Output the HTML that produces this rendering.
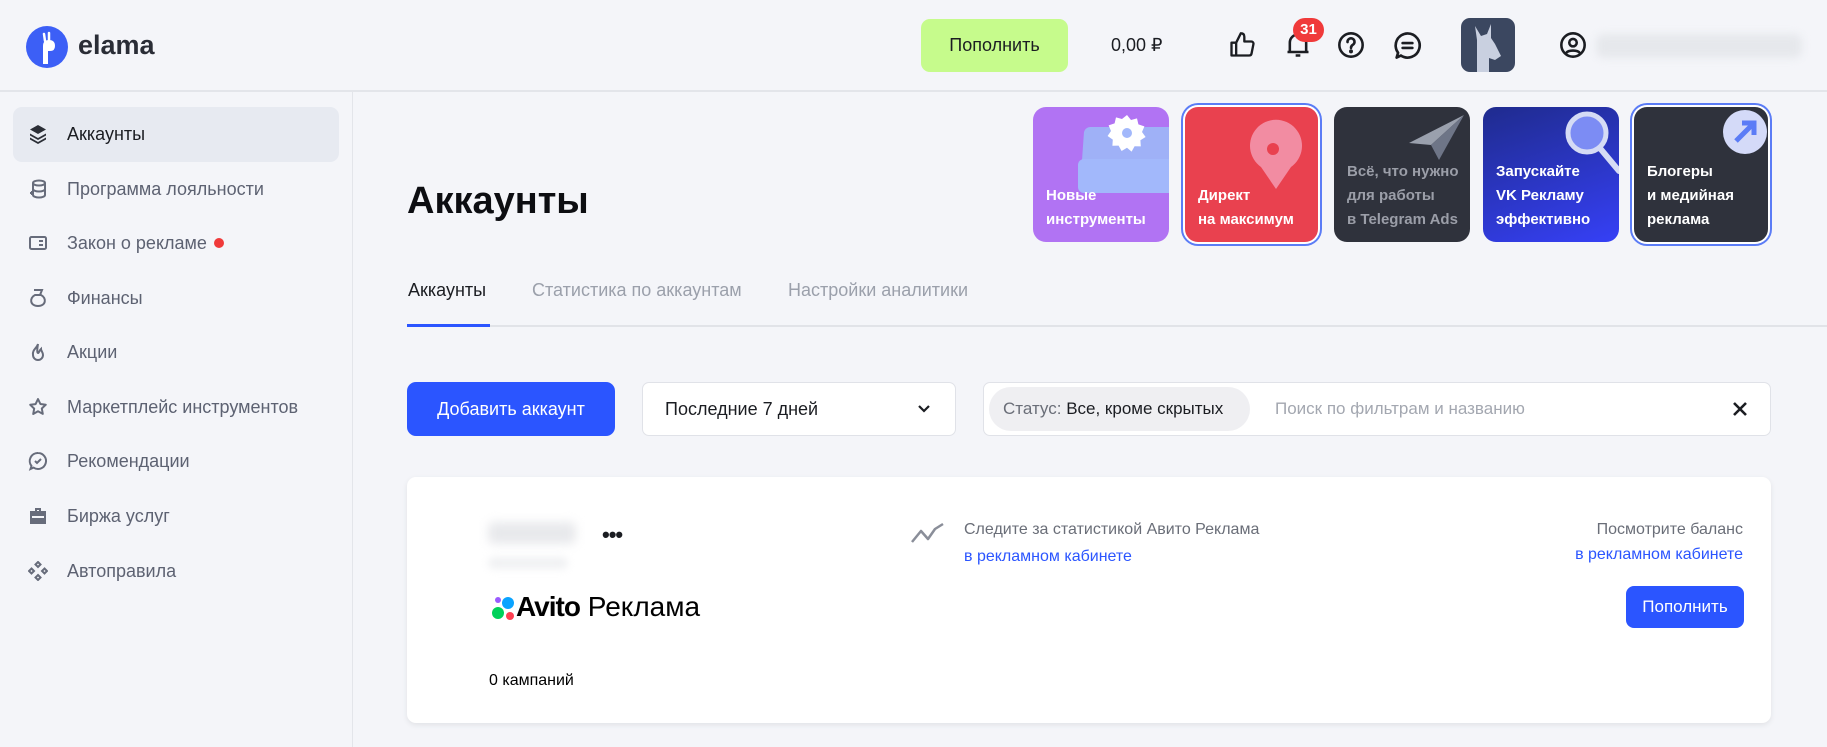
<!DOCTYPE html>
<html><head><meta charset="utf-8"><style>
*{box-sizing:border-box;margin:0;padding:0}
body{width:1827px;height:747px;overflow:hidden;background:#f4f5f9;font-family:"Liberation Sans","Noto Sans CJK SC",sans-serif;color:#1b1d22;position:relative}
.abs{position:absolute}
.hdr{left:0;top:0;width:1827px;height:92px;border-bottom:2px solid #e3e5ea}
.side{left:0;top:92px;width:353px;height:655px;border-right:1px solid #e3e5ea}
.it{position:absolute;left:0;height:30px;display:flex;align-items:center;font-size:18px;color:#5d6272}
.it svg{position:absolute;left:28px}
.it span{position:absolute;left:67px;white-space:nowrap}
.card{border-radius:13px;width:136px;height:135px;top:107px;overflow:hidden;color:#fff;font-size:15px;font-weight:bold;line-height:24px}
.card .t{position:absolute;left:13px;bottom:10px}
.tab{top:280px;font-size:18px;color:#9ba0ab}
</style></head><body>
<div class="abs hdr"></div>
<svg class="abs" style="left:26px;top:26px" width="42" height="42" viewBox="0 0 42 42"><circle cx="21" cy="21" r="21" fill="#3c5ff6"/><path d="M17 38 V20 q0-6 6-6 q6 0 6 6 q0 5-5 5 h-2 V38z" fill="#fff"/><path d="M19 15 l-1-7 M23 14 l0-7" stroke="#fff" stroke-width="2.5" stroke-linecap="round"/></svg>
<div class="abs" style="left:78px;top:30px;font-size:27px;font-weight:bold;color:#2a2d36">elama</div>
<div class="abs" style="left:921px;top:19px;width:147px;height:53px;background:#c6fb8c;border-radius:9px;font-size:18px;display:flex;align-items:center;justify-content:center">Пополнить</div>
<div class="abs" style="left:1111px;top:35px;font-size:18px">0,00 ₽</div>
<svg class="abs" style="left:1228px;top:31px" width="28" height="28" viewBox="0 0 24 24" fill="none" stroke="#1b1d22" stroke-width="2" stroke-linejoin="round"><path d="M7 10v11H3V10zM7 10l4-8c2 0 3 1 3 3v4h6c1 0 2 1 1.8 2.2l-1.6 8C20 20.5 19 21 18 21H7"/></svg>
<svg class="abs" style="left:1284px;top:31px" width="28" height="28" viewBox="0 0 24 24" fill="none" stroke="#1b1d22" stroke-width="2.2" stroke-linejoin="round"><path d="M5 18V10a7 7 0 0114 0v8zM3 18h18M10 21h4"/></svg>
<div class="abs" style="left:1293px;top:18px;width:31px;height:24px;background:#f03a3a;border-radius:12px;color:#fff;font-size:15px;font-weight:bold;text-align:center;line-height:24px">31</div>
<svg class="abs" style="left:1337px;top:31px" width="28" height="28" viewBox="0 0 24 24" fill="none" stroke="#1b1d22" stroke-width="2.2"><circle cx="12" cy="12" r="10"/><path d="M9 9.5a3 3 0 115 2c-1.2.8-2 1.3-2 3" stroke-linecap="round"/><circle cx="12" cy="17.5" r=".6" fill="#1b1d22"/></svg>
<svg class="abs" style="left:1393px;top:31px" width="29" height="29" viewBox="0 0 24 24" fill="none" stroke="#1b1d22" stroke-width="2.2"><path d="M12 2a10 10 0 11-5.5 18.3L3 22l1.2-4A10 10 0 0112 2z" stroke-linejoin="round"/><path d="M8 10h8M8 14h8" stroke-linecap="round"/></svg>
<div class="abs" style="left:1461px;top:18px;width:54px;height:54px;background:#3b4760;border-radius:9px;overflow:hidden"><svg width="54" height="54" viewBox="0 0 54 54"><path d="M16 54V22l-2-14 6 10 6-2 4-10 0 14 4 6 6 12-6 4-6-2v14z" fill="#c9d0e0"/></svg></div>
<svg class="abs" style="left:1559px;top:31px" width="28" height="28" viewBox="0 0 24 24" fill="none" stroke="#1b1d22" stroke-width="2.2"><circle cx="12" cy="12" r="10"/><circle cx="12" cy="10" r="3.2"/><path d="M6 19c2-3 10-3 12 0"/></svg>
<div class="abs" style="left:1596px;top:34px;width:206px;height:24px;background:#e6e8ec;border-radius:8px;filter:blur(4px)"></div>

<div class="abs side"></div>
<div class="abs" style="left:13px;top:107px;width:326px;height:55px;background:#e7eaf1;border-radius:9px"></div>
<div class="it" style="top:119px;color:#1b1d22"><svg width="20" height="20" viewBox="0 0 20 20" fill="#2b2e36"><path d="M10 1l8 4.5-8 4.5-8-4.5z"/><path d="M2 9.5l8 4.5 8-4.5v2l-8 4.5-8-4.5z"/><path d="M2 13.5l8 4.5 8-4.5v2l-8 4.5-8-4.5z"/></svg><span>Аккаунты</span></div>
<div class="it" style="top:174px"><svg width="20" height="20" viewBox="0 0 20 20" fill="none" stroke="#676c7b" stroke-width="2"><ellipse cx="11" cy="4" rx="6" ry="2.5"/><path d="M5 4v12c0 1.5 3 2.5 6 2.5s6-1 6-2.5V4M5 10c0 1.5 3 2.5 6 2.5s6-1 6-2.5M2 14h4M4 12v4"/></svg><span>Программа лояльности</span></div>
<div class="it" style="top:228px"><svg width="20" height="20" viewBox="0 0 20 20" fill="none" stroke="#676c7b" stroke-width="2"><rect x="2" y="4" width="16" height="12" rx="1.5"/><path d="M11 8h4M11 12h4"/></svg><span>Закон о рекламе</span></div>
<div class="abs" style="left:214px;top:238px;width:10px;height:10px;border-radius:5px;background:#f03a3a"></div>
<div class="it" style="top:283px"><svg width="20" height="20" viewBox="0 0 20 20" fill="none" stroke="#676c7b" stroke-width="2"><path d="M6 2h8l-2 5M7 7c-6 3-5 11 3 11s9-8 3-11z"/></svg><span>Финансы</span></div>
<div class="it" style="top:337px"><svg width="20" height="20" viewBox="0 0 20 20" fill="none" stroke="#676c7b" stroke-width="2"><path d="M10 2c-1 4-6 6-5 11a5 5 0 0010 0c0-3-2-4-2-6-2 2-2 4-3 4s-1-3 0-9z"/></svg><span>Акции</span></div>
<div class="it" style="top:392px"><svg width="20" height="20" viewBox="0 0 20 20" fill="none" stroke="#676c7b" stroke-width="2" stroke-linejoin="round"><path d="M10 2l2.4 5 5.4.7-4 3.8 1 5.4L10 14.3 5.2 17l1-5.4-4-3.8 5.4-.7z"/></svg><span>Маркетплейс инструментов</span></div>
<div class="it" style="top:446px"><svg width="20" height="20" viewBox="0 0 20 20" fill="none" stroke="#676c7b" stroke-width="2"><path d="M10 2a8 8 0 11-4.5 14.6L2.5 18l1-3A8 8 0 0110 2z"/><path d="M7 10l2 2 4-4"/></svg><span>Рекомендации</span></div>
<div class="it" style="top:501px"><svg width="20" height="20" viewBox="0 0 20 20" fill="#676c7b"><path d="M7 2h6v3h5v13H2V5h5zM9 4v1h2V4zM4 10v2h12v-2z"/></svg><span>Биржа услуг</span></div>
<div class="it" style="top:556px"><svg width="20" height="20" viewBox="0 0 20 20" fill="none" stroke="#676c7b" stroke-width="2"><path d="M10 1l2.5 2.5L10 6 7.5 3.5zM10 14l2.5 2.5L10 19l-2.5-2.5zM3.5 7.5L6 10l-2.5 2.5L1 10zM16.5 7.5L19 10l-2.5 2.5L14 10z"/></svg><span>Автоправила</span></div>

<div class="abs" style="left:407px;top:180px;font-size:38px;font-weight:bold;color:#0d0e12">Аккаунты</div>

<div class="abs card" style="left:1033px;background:#b173f3"><div class="abs" style="left:50px;top:20px;width:100px;height:38px;background:#9fb1f7;border-radius:6px;transform:skewX(-4deg)"></div><div class="abs" style="left:45px;top:52px;width:100px;height:34px;background:#a2b8fb;border-radius:6px"></div><svg class="abs" style="left:70px;top:4px" width="48" height="48" viewBox="0 0 24 24"><path fill="#fff" d="M12 2l2 2.5 3-.8.7 3 3 1-1.2 2.8 1.8 2.5-2.6 1.6.2 3.1-3.1-.1-1.5 2.7L12 18.4 9.3 20l-1.5-2.7-3.1.1.2-3.1L2.3 12.5 4 10 2.8 7.2l3-1 .7-3 3 .8z"/><circle cx="12" cy="11" r="2.5" fill="#a2b8fb"/></svg><div class="t">Новые<br>инструменты</div></div>
<div class="abs card" style="left:1185px;background:#e9414f;box-shadow:0 0 0 2px #fff,0 0 0 4px #5b7cf6;width:133px"><svg class="abs" style="left:62px;top:12px" width="58" height="72" viewBox="0 0 58 72"><path d="M29 70L14 48A26 26 0 1144 48z" fill="#f28ca2"/><circle cx="26" cy="30" r="6" fill="#e9414f"/></svg><div class="t">Директ<br>на максимум</div></div>
<div class="abs card" style="left:1334px;background:#2f323c;color:#9b9ea8"><svg class="abs" style="left:75px;top:8px" width="55" height="45" viewBox="0 0 55 45"><path d="M55 0L0 28l22 2z" fill="#9aa0ad"/><path d="M55 0L22 30l8 15z" fill="#6e7587"/></svg><div class="t">Всё, что нужно<br>для работы<br>в Telegram Ads</div></div>
<div class="abs card" style="left:1483px;background:linear-gradient(160deg,#1f2b8e,#3640f6)"><svg class="abs" style="left:80px;top:2px" width="60" height="65" viewBox="0 0 60 65"><path d="M36 38l20 24" stroke="#d5dbf5" stroke-width="6" stroke-linecap="round"/><circle cx="24" cy="24" r="19" fill="#7c8cf4" stroke="#d5dbf5" stroke-width="5"/></svg><div class="t">Запускайте<br>VK Рекламу<br>эффективно</div></div>
<div class="abs card" style="left:1634px;background:#2f323c;box-shadow:0 0 0 2px #fff,0 0 0 4px #5b7cf6;width:134px"><svg class="abs" style="left:88px;top:2px" width="46" height="46" viewBox="0 0 46 46"><circle cx="23" cy="23" r="22" fill="#d4daf8"/><path d="M14 32L32 14M20 14h12v12" stroke="#5b7cf6" stroke-width="5" fill="none"/></svg><div class="t">Блогеры<br>и медийная<br>реклама</div></div>

<div class="abs" style="left:407px;top:325px;width:1420px;height:2px;background:#e1e3e8"></div>
<div class="abs" style="left:407px;top:324px;width:83px;height:3px;background:#2b55ff"></div>
<div class="abs tab" style="left:408px;color:#1b1d22">Аккаунты</div>
<div class="abs tab" style="left:532px">Статистика по аккаунтам</div>
<div class="abs tab" style="left:788px">Настройки аналитики</div>

<div class="abs" style="left:407px;top:382px;width:208px;height:54px;background:#2b55ff;border-radius:9px;color:#fff;font-size:18px;display:flex;align-items:center;justify-content:center">Добавить аккаунт</div>
<div class="abs" style="left:642px;top:382px;width:314px;height:54px;background:#fff;border:1px solid #e0e2e8;border-radius:7px;font-size:18px;padding-left:22px;line-height:52px">Последние 7 дней</div>
<svg class="abs" style="left:915px;top:400px" width="18" height="18" viewBox="0 0 18 18" fill="none" stroke="#1b1d22" stroke-width="2.2"><path d="M4 6l5 5 5-5"/></svg>
<div class="abs" style="left:983px;top:382px;width:788px;height:54px;background:#fff;border:1px solid #e0e2e8;border-radius:7px"></div>
<div class="abs" style="left:989px;top:387px;width:261px;height:44px;background:#efeff2;border-radius:22px;font-size:17px;line-height:44px;padding-left:14px;color:#6a6e78">Статус: <span style="color:#1b1d22">Все, кроме скрытых</span></div>
<div class="abs" style="left:1275px;top:399px;font-size:17px;color:#a3a7b0">Поиск по фильтрам и названию</div>
<svg class="abs" style="left:1731px;top:400px" width="18" height="18" viewBox="0 0 18 18" stroke="#1b1d22" stroke-width="2.6"><path d="M3 3l12 12M15 3L3 15"/></svg>

<div class="abs" style="left:407px;top:477px;width:1364px;height:246px;background:#fff;border-radius:9px;box-shadow:0 2px 6px rgba(0,0,0,.08)"></div>
<div class="abs" style="left:488px;top:522px;width:88px;height:22px;background:#e8e9ec;border-radius:6px;filter:blur(5px)"></div>
<div class="abs" style="left:488px;top:557px;width:80px;height:12px;background:#f0f1f3;border-radius:6px;filter:blur(4px)"></div>
<div class="abs" style="left:602px;top:522px;font-size:22px;font-weight:bold;letter-spacing:-1px">•••</div>
<svg class="abs" style="left:491px;top:595px" width="24" height="26" viewBox="0 0 24 26"><circle cx="7" cy="18" r="6" fill="#00d15a"/><circle cx="17" cy="8" r="6" fill="#0aa3ff"/><circle cx="19" cy="21" r="4" fill="#ff4053"/><circle cx="7" cy="5" r="3" fill="#9a5bff"/></svg>
<div class="abs" style="left:516px;top:591px;font-size:28px;color:#000"><b style="letter-spacing:-1px">Avito</b> Реклама</div>
<div class="abs" style="left:489px;top:672px;font-size:16px;color:#000">0 кампаний</div>

<svg class="abs" style="left:911px;top:522px" width="34" height="22" viewBox="0 0 34 22" fill="none" stroke="#8a8e99" stroke-width="2.5" stroke-linejoin="round"><path d="M1 20l9-11 7 8 7-10 8-5"/></svg>
<div class="abs" style="left:964px;top:521px;font-size:16px;color:#6a6e78">Следите за статистикой Авито Реклама</div>
<div class="abs" style="left:964px;top:548px;font-size:16px;color:#2b55ff">в рекламном кабинете</div>
<div class="abs" style="left:1443px;width:300px;top:521px;font-size:16px;color:#6a6e78;text-align:right">Посмотрите баланс</div>
<div class="abs" style="left:1443px;width:300px;top:546px;font-size:16px;color:#2b55ff;text-align:right">в рекламном кабинете</div>
<div class="abs" style="left:1626px;top:586px;width:118px;height:42px;background:#2b55ff;border-radius:8px;color:#fff;font-size:17px;display:flex;align-items:center;justify-content:center">Пополнить</div>
</body></html>
